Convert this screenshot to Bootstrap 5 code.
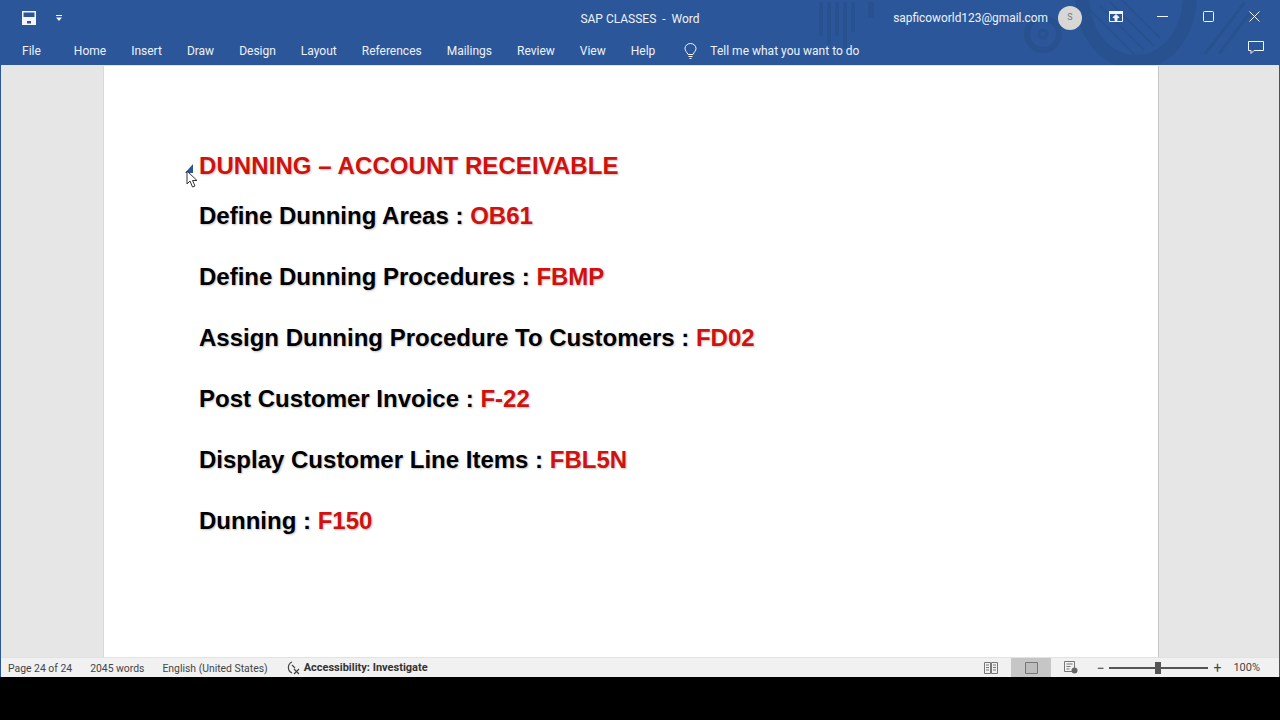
<!DOCTYPE html>
<html lang="en">
<head>
    <meta charset="UTF-8">
    <title>SAP CLASSES - Word</title>
    <link href="https://cdn.jsdelivr.net/npm/bootstrap@5.3.3/dist/css/bootstrap.min.css" rel="stylesheet">
    <style>
        html, body { height: 100%; }
        body { background: #000; font-family: Roboto, "Open Sans", sans-serif; overflow: hidden; }
        .word-app { height: 677px; background: #e6e6e6; border-left: 1px solid #2b579a; border-right: 1px solid #2b579a; }
        .word-ribbon { background: #2b579a; color: #eef2f8; height: 65px; position: relative; flex: none; }
        .ribbon-art { position: absolute; right: 10px; top: 0; }
        .title-row { height: 36px; position: relative; }
        .title-side { width: 386px; flex: none; }
        .save-icon { margin-left: 21px; margin-right: 20px; }
        .doc-title { font-size: 12px; padding-top: 2px; }
        .account-mail { font-size: 11.9px; margin-right: 10px; padding-top: 1px; white-space: nowrap; }
        .avatar-dot { width: 24px; height: 24px; border-radius: 50%; background: #d9d7d5; color: #777; font-size: 9px; margin-right: 11px; flex: none; }
        .win-btn { width: 46px; flex: none; line-height: 1; margin-bottom: 5px; }
        .win-group { padding-right: 2px; }
        .tabs-row { height: 29px; position: relative; font-size: 12px; padding-left: 21px; gap: 25px; padding-top: 1px; }
        .tab-file { margin-right: 8px; }
        .tell-me { margin-left: 4px; gap: 13px; }
        .comment-btn { position: absolute; right: 15px; top: 5px; }
        .doc-area { flex: 1; min-height: 0; border-top: 1px solid #dbe7f5; }
        .doc-page { width: 1056px; margin-left: 102px; background: #fff; border-left: 1px solid #d9d9d9; border-right: 1px solid #c6c6c6; padding: 86px 0 0 95px; position: relative; height: 100%; }
        .doc-heading, .doc-line { font-family: "Liberation Sans", Arial, sans-serif; font-weight: 700; text-shadow: 1px 1px 2px rgba(0,0,0,.25); margin: 0; white-space: nowrap; }
        .doc-heading { font-size: 24px; line-height: 28px; color: #d0120f; margin-bottom: 22px; letter-spacing: .08px; }
        .doc-line { font-size: 24px; line-height: 28px; color: #000; margin-bottom: 33px; }
        .doc-code { color: #d0120f; }
        .collapse-mark { position: absolute; left: 81px; top: 98px; width: 0; height: 0; border-bottom: 9px solid #2b579a; border-left: 8px solid transparent; }
        .mouse-arrow { position: absolute; left: 82px; top: 104px; }
        .status-row { height: 20px; flex: none; background: #f1f1f1; border-top: 1px solid #e2e2e2; font-size: 10.4px; color: #444; padding-left: 7px; padding-right: 19px; }
        .status-gap { margin-right: 18px; padding-top: 2px; white-space: nowrap; }
        .access-text { font-size: 11px; font-weight: 700; color: #333; margin-left: 3px; padding-top: 2px; }
        .view-btn { width: 40px; height: 100%; }
        .view-on { background: #c6c6c6; }
        .zoom-track { width: 99px; height: 2px; background: #555; position: relative; margin: 0 5px; }
        .zoom-thumb { position: absolute; left: 46px; top: -5px; width: 6px; height: 12px; background: #555; }
        .zoom-sign { font-size: 14px; line-height: 1; }
        .zoom-minus { margin-left: 5px; }
        .zoom-pct { font-size: 11px; margin-left: 12px; padding-top: 2px; }
    </style>
</head>
<body>
    <div class="word-app d-flex flex-column">
        <header class="word-ribbon d-flex flex-column">
            <svg class="ribbon-art" width="470" height="65" viewBox="0 0 470 65" fill="none" stroke="#28528f">
                <g stroke-width="4"><path d="M22 2v34M30 2v42M38 2v34M46 2v46M54 2v30"/></g>
                <path d="M72 2v16" stroke-width="6"/>
                <circle cx="244" cy="34" r="16" stroke-width="6"/>
                <circle cx="244" cy="34" r="4" stroke-width="3"/>
                <path d="M283 -6c0 40 24 68 54 68s54-28 54-68" stroke-width="14"/>
                <g stroke-width="2"><path d="M291 10l44 44M301 6l44 44M311 2l44 44M321 -2l40 40"/></g>
                <path d="M406 54l40-52M420 54l30-40" stroke-width="3"/>
            </svg>
            <div class="title-row d-flex align-items-center">
                <div class="title-side d-flex align-items-center">
                    <svg class="save-icon" width="14" height="14" viewBox="0 0 14 14">
                        <path fill="#f4f6fa" fill-rule="evenodd" d="M0 0h14v14H0zM1.500 1.500v4.500h11V1.500zM5 10v2.500h4V10z"/>
                    </svg>
                    <svg width="6" height="6" viewBox="0 0 6 6"><path fill="#f4f6fa" d="M0 0h6v1H0zM0 2.500h6L3 6z"/></svg>
                </div>
                <div class="doc-title flex-grow-1 text-center">SAP CLASSES &nbsp;-&nbsp; Word</div>
                <div class="title-side win-group d-flex align-items-center justify-content-end">
                    <span class="account-mail">sapficoworld123@gmail.com</span>
                    <span class="avatar-dot d-flex align-items-center justify-content-center">S</span>
                    <div class="win-btn text-center"><svg width="14" height="11" viewBox="0 0 14 11" fill="none" stroke="#f4f6fa"><path d="M.5.500h13v10H.5z"/><path fill="#f4f6fa" d="M.5.500h13v2H.5zM7 3.500L4 6.500h2v3h2v-3h2z"/></svg></div>
                    <div class="win-btn text-center"><svg width="11" height="11" viewBox="0 0 11 11"><path stroke="#f4f6fa" d="M0 5.500h11"/></svg></div>
                    <div class="win-btn text-center"><svg width="11" height="11" viewBox="0 0 11 11" fill="none"><rect x=".5" y=".5" width="10" height="10" rx="1" stroke="#f4f6fa"/></svg></div>
                    <div class="win-btn text-center"><svg width="11" height="11" viewBox="0 0 11 11"><path stroke="#f4f6fa" d="M.5.500l10 10M10.500.500l-10 10"/></svg></div>
                </div>
            </div>
            <nav class="tabs-row d-flex align-items-center">
                <span class="tab-file">File</span>
                <span>Home</span>
                <span>Insert</span>
                <span>Draw</span>
                <span>Design</span>
                <span>Layout</span>
                <span>References</span>
                <span>Mailings</span>
                <span>Review</span>
                <span>View</span>
                <span>Help</span>
                <span class="tell-me d-flex align-items-center">
                    <svg width="13" height="16" viewBox="0 0 13 16" fill="none" stroke="#f4f6fa"><path d="M4 11.500C3 9 1 8 1 5.500a5.500 5 0 0 1 11 0c0 2.500-2 3.500-3 6zM4.500 13.500h4M5.500 15.500h2"/></svg>
                    <span>Tell me what you want to do</span>
                </span>
                <svg class="comment-btn" width="16" height="14" viewBox="0 0 16 14" fill="none" stroke="#f4f6fa"><path d="M.5.500h15v9H6l-3 3v-3H.5z"/></svg>
            </nav>
        </header>

        <main class="doc-area">
            <div class="doc-page">
                <span class="collapse-mark"></span>
                <svg class="mouse-arrow" width="13" height="18" viewBox="0 0 13 18"><path fill="#fff" stroke="#333" d="M1 1v13l3-3 2.500 6 2.500-1-2.500-5.500H11z"/></svg>
                <h1 class="doc-heading">DUNNING – ACCOUNT RECEIVABLE</h1>
                <p class="doc-line">Define Dunning Areas : <span class="doc-code">OB61</span></p>
                <p class="doc-line">Define Dunning Procedures : <span class="doc-code">FBMP</span></p>
                <p class="doc-line">Assign Dunning Procedure To Customers : <span class="doc-code">FD02</span></p>
                <p class="doc-line">Post Customer Invoice : <span class="doc-code">F-22</span></p>
                <p class="doc-line">Display Customer Line Items : <span class="doc-code">FBL5N</span></p>
                <p class="doc-line">Dunning : <span class="doc-code">F150</span></p>
            </div>
        </main>

        <footer class="status-row d-flex align-items-center">
            <span class="status-gap">Page 24 of 24</span>
            <span class="status-gap">2045 words</span>
            <span class="status-gap">English (United States)</span>
            <svg width="15" height="14" viewBox="0 0 15 14" fill="none" stroke="#444" stroke-width="1.2"><path d="M6 1a6 6 0 0 0 0 11M6 4l3 3M8 8l5 5M13 8l-5 5"/></svg>
            <span class="access-text">Accessibility: Investigate</span>
            <div class="ms-auto d-flex align-items-center h-100">
                <div class="view-btn d-flex align-items-center justify-content-center"><svg width="14" height="12" viewBox="0 0 14 12" fill="none" stroke="#777"><path d="M.5.500h6v11h-6zM7.500.500h6v11h-6zM2 3h3M2 5.500h3M2 8h3M9 3h3M9 5.500h3M9 8h3"/></svg></div>
                <div class="view-btn view-on d-flex align-items-center justify-content-center"><svg width="13" height="12" viewBox="0 0 13 12" fill="#bdbdbd" stroke="#777"><path d="M.5.500h12v11H.5z"/></svg></div>
                <div class="view-btn d-flex align-items-center justify-content-center"><svg width="14" height="13" viewBox="0 0 14 13" fill="none" stroke="#777"><path d="M.5.500h10v10H.5zM2.500 3h6M2.500 5.500h4M2.500 8h3"/><circle cx="10.500" cy="9.500" r="3" fill="#666" stroke="none"/></svg></div>
                <span class="zoom-sign zoom-minus">−</span>
                <div class="zoom-track"><span class="zoom-thumb"></span></div>
                <span class="zoom-sign">+</span>
                <span class="zoom-pct">100%</span>
            </div>
        </footer>
    </div>
    <script src="https://cdn.jsdelivr.net/npm/bootstrap@5.3.3/dist/js/bootstrap.bundle.min.js"></script>
</body>
</html>
